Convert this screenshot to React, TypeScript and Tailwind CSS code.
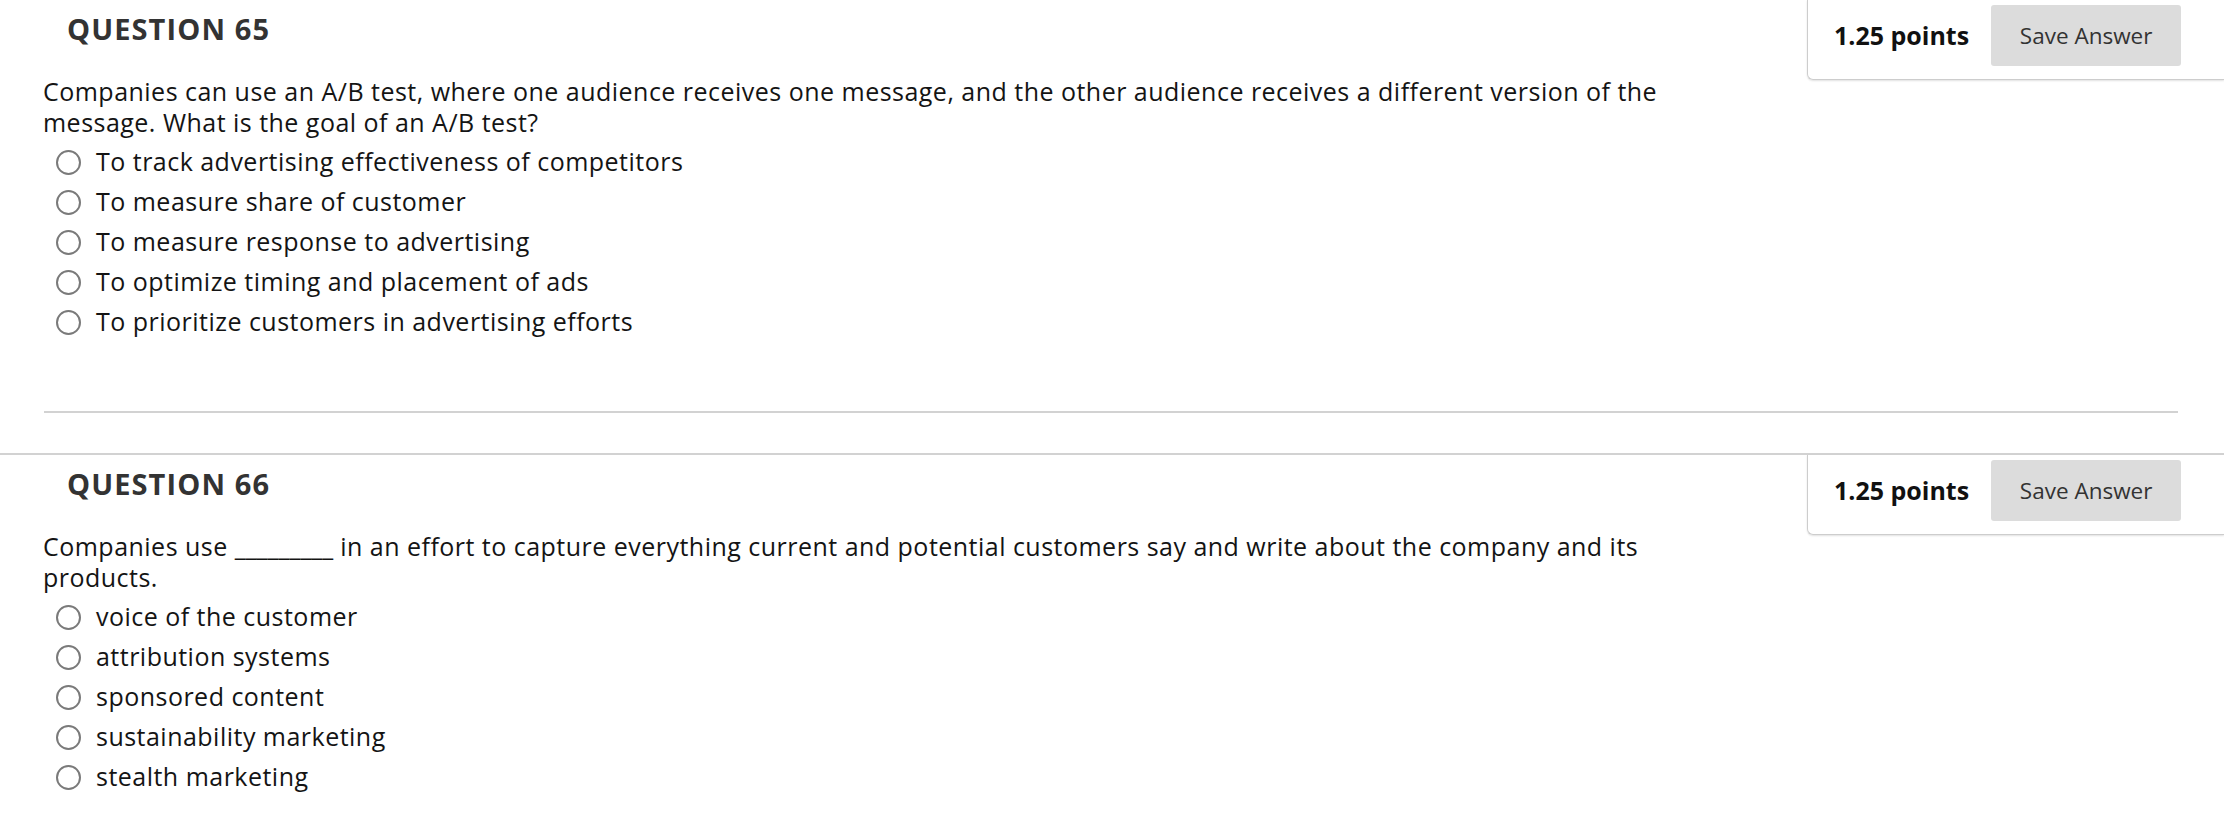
import React from "react";

type Q = {
  num: number;
  lines: React.ReactNode[];
  options: string[];
  separator: boolean;
};

const questions: Q[] = [
  {
    num: 65,
    lines: [
      "Companies can use an A/B test, where one audience receives one message, and the other audience receives a different version of the",
      "message. What is the goal of an A/B test?",
    ],
    options: [
      "To track advertising effectiveness of competitors",
      "To measure share of customer",
      "To measure response to advertising",
      "To optimize timing and placement of ads",
      "To prioritize customers in advertising efforts",
    ],
    separator: true,
  },
  {
    num: 66,
    lines: [
      <>
        Companies use <span className="tracking-normal">_________</span> in an effort to capture everything current
        and potential customers say and write about the company and its
      </>,
      "products.",
    ],
    options: [
      "voice of the customer",
      "attribution systems",
      "sponsored content",
      "sustainability marketing",
      "stealth marketing",
    ],
    separator: false,
  },
];

function Radio() {
  return (
    <span className="inline-block w-[25px] h-[25px] rounded-full border-2 border-[#7a7a7a] bg-white shrink-0" />
  );
}

function Question({ q }: { q: Q }) {
  return (
    <div className="border-t-2 border-[#d2d2d2]">
      <div className="flex justify-between">
        <div className="pl-[43px] flex-1">
          <h2 className="mt-[10px] ml-[24px] text-[29px] leading-[38px] font-bold tracking-[1.1px] text-[#333333]">
            QUESTION {q.num}
          </h2>
          <div className="mt-[28px] text-[25px] leading-[31px] tracking-[0.48px] text-[#141414] whitespace-nowrap">
            {q.lines.map((l, i) => (
              <div key={i}>{l}</div>
            ))}
          </div>
          <ul className="mt-[4px] ml-[13px]">
            {q.options.map((o) => (
              <li
                key={o}
                className="h-[40px] flex items-center gap-[15px] text-[25px] tracking-[0.48px] text-[#141414]"
              >
                <Radio />
                <span>{o}</span>
              </li>
            ))}
          </ul>
        </div>
        <div className="self-start w-[417px] flex items-center border-l border-b border-[#cdcdcd] rounded-bl-[6px] shadow-[0_1px_2px_rgba(0,0,0,0.12)] pl-[26px] pt-[5px] pb-[13px]">
          <span className="text-[25px] font-bold text-[#111111] whitespace-nowrap">1.25 points</span>
          <button className="ml-[22px] w-[190px] h-[61px] rounded-[3px] bg-[#dcdcdc] text-[22.5px] text-[#333333] whitespace-nowrap">
            Save Answer
          </button>
        </div>
      </div>
      {q.separator && (
        <div className="mt-[69px] mb-[40px] ml-[44px] mr-[46px] h-[2px] bg-[#d2d2d2]" />
      )}
    </div>
  );
}

export default function App() {
  return (
    <div className="w-[2224px] h-[822px] overflow-hidden bg-white font-['Open_Sans',sans-serif]">
      <div className="-mt-[2px]">
        {questions.map((q) => (
          <Question key={q.num} q={q} />
        ))}
      </div>
    </div>
  );
}
